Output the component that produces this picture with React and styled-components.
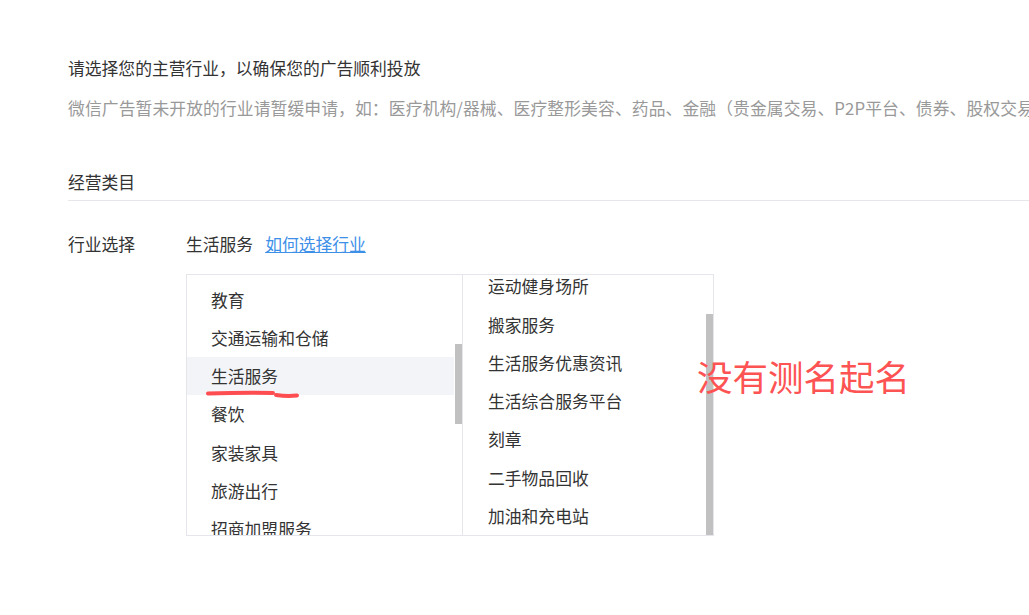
import React, { useLayoutEffect, useRef, useState } from "react";
import styled, { createGlobalStyle } from "styled-components";

const GlobalStyle = createGlobalStyle`
  html, body {
    margin: 0;
    padding: 0;
    background: #fff;
    overflow: hidden;
  }
  body {
    font-family: "Noto Sans CJK SC", "Noto Sans", sans-serif;
    color: #333;
  }
`;

const Page = styled.div`
  padding: 56px 0 0 68px;
  font-size: 16.8px;
  line-height: 24px;
`;

const Title = styled.div`
  color: #333;
`;

const Tip = styled.div`
  margin-top: 16px;
  color: #999;
  white-space: nowrap;
  letter-spacing: 0.1px;
`;

const SectionHead = styled.div`
  margin-top: 50px;
  padding-bottom: 6px;
  border-bottom: 1px solid #e6e7eb;
  color: #333;
`;

const FormRow = styled.div`
  display: flex;
  margin-top: 31px;
`;

const Label = styled.div`
  width: 118px;
  flex-shrink: 0;
  color: #333;
`;

const Field = styled.div`
  display: flex;
  flex-direction: column;
`;

const Current = styled.div`
  display: flex;
  gap: 12px;
`;

const HelpLink = styled.a`
  color: #3d8fe8;
  text-decoration: underline;
  cursor: pointer;
`;

const PickerBox = styled.div`
  position: relative;
  margin-top: 18px;
  width: 526px;
  height: 260px;
  display: flex;
  border: 1px solid #e4e6eb;
`;

const Column = styled.div`
  position: relative;
  width: ${(p) => p.$width}px;
  height: 100%;
  border-right: ${(p) => (p.$divider ? "1px solid #e4e6eb" : "none")};
  flex-shrink: 0;
`;

const Scroller = styled.div`
  height: 100%;
  overflow-y: auto;
  scrollbar-width: none;
  &::-webkit-scrollbar {
    display: none;
  }
`;

const Item = styled.div`
  height: 38.25px;
  line-height: 38.25px;
  margin-right: 8px;
  padding-left: ${(p) => p.$indent}px;
  color: #333;
  background: ${(p) => (p.$active ? "#f3f4f8" : "transparent")};
  white-space: nowrap;
  cursor: pointer;
`;

const Thumb = styled.div`
  position: absolute;
  right: ${(p) => p.$right}px;
  width: 7px;
  background: #c1c1c1;
`;

const Scribble = styled.svg`
  position: absolute;
  left: 0;
  top: 0;
  pointer-events: none;
`;

const Note = styled.div`
  position: absolute;
  left: 510px;
  top: 80px;
  font-size: 35.5px;
  line-height: 42px;
  color: #fd5353;
  white-space: nowrap;
`;

const industries = [
  "游戏",
  "网络服务",
  "电商",
  "商务服务",
  "房地产",
  "汽车",
  "教育",
  "交通运输和仓储",
  "生活服务",
  "餐饮",
  "家装家具",
  "旅游出行",
  "招商加盟服务",
  "工具类软件",
  "文化娱乐",
  "美容个护",
  "母婴用品",
  "服饰鞋包",
  "食品饮料",
  "数码家电",
  "农林牧渔",
  "其他",
];

const subIndustries = [
  "家政服务",
  "运动健身场所",
  "搬家服务",
  "生活服务优惠资讯",
  "生活综合服务平台",
  "刻章",
  "二手物品回收",
  "加油和充电站",
];

function ScrollColumn({ items, active, indent, width, divider, offset, thumbRight }) {
  const ref = useRef(null);
  const [thumb, setThumb] = useState({ top: 0, height: 0 });

  useLayoutEffect(() => {
    const el = ref.current;
    el.scrollTop = offset;
    const h = el.clientHeight;
    const sh = el.scrollHeight;
    setThumb({ top: (el.scrollTop / sh) * h, height: (h / sh) * h });
  }, [offset]);

  return (
    <Column $width={width} $divider={divider}>
      <Scroller ref={ref}>
        {items.map((name) => (
          <Item key={name} $indent={indent} $active={name === active}>
            {name}
          </Item>
        ))}
      </Scroller>
      <Thumb $right={thumbRight} style={{ top: thumb.top, height: thumb.height }} />
    </Column>
  );
}

export default function App() {
  return (
    <>
      <GlobalStyle />
      <Page>
        <Title>请选择您的主营行业，以确保您的广告顺利投放</Title>
        <Tip>
          微信广告暂未开放的行业请暂缓申请，如：医疗机构/器械、医疗整形美容、药品、金融（贵金属交易、P2P平台、债券、股权交易等）
        </Tip>
        <SectionHead>经营类目</SectionHead>
        <FormRow>
          <Label>行业选择</Label>
          <Field>
            <Current>
              <span>生活服务</span>
              <HelpLink>如何选择行业</HelpLink>
            </Current>
            <PickerBox>
              <ScrollColumn
                items={industries}
                active="生活服务"
                indent={24}
                width={275}
                divider
                offset={223.5}
                thumbRight={0}
              />
              <ScrollColumn
                items={subIndustries}
                indent={25}
                width={250}
                offset={100}
                thumbRight={0}
              />
              <Scribble width="140" height="140">
                <path
                  d="M21 118.5 Q 55 117.5 86 118"
                  stroke="#fe4d50"
                  strokeWidth="4"
                  strokeLinecap="round"
                  fill="none"
                />
                <path
                  d="M89 120 Q 100 121.5 110 120.5"
                  stroke="#fe4d50"
                  strokeWidth="4"
                  strokeLinecap="round"
                  fill="none"
                />
              </Scribble>
              <Note>没有测名起名</Note>
            </PickerBox>
          </Field>
        </FormRow>
      </Page>
    </>
  );
}
